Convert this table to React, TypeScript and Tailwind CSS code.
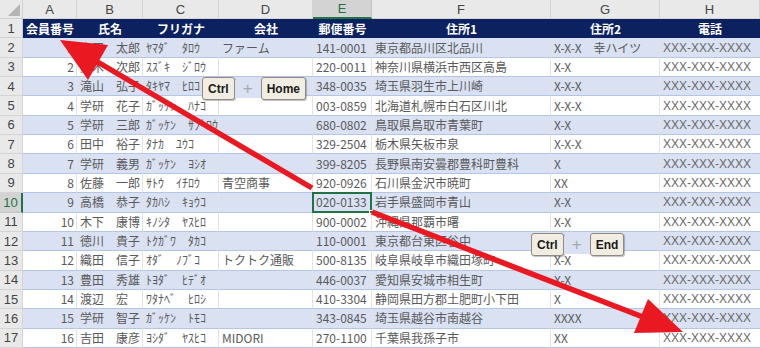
const colLetters = ['A', 'B', 'C', 'D', 'E', 'F', 'G', 'H']
const headers = ['会員番号', '氏名', 'フリガナ', '会社', '郵便番号', '住所1', '住所2', '電話']

const members: string[][] = [
  ['1', '山田　太郎', 'ﾔﾏﾀﾞ　ﾀﾛｳ', 'ファーム', '141-0001', '東京都品川区北品川', 'X-X-X　幸ハイツ'],
  ['2', '鈴木　次郎', 'ｽｽﾞｷ　ｼﾞﾛｳ', '', '220-0011', '神奈川県横浜市西区高島', 'X-X'],
  ['3', '滝山　弘子', 'ﾀｷﾔﾏ　ﾋﾛｺ', '', '348-0035', '埼玉県羽生市上川崎', 'X-X-X'],
  ['4', '学研　花子', 'ｶﾞｯｹﾝ　ﾊﾅｺ', '', '003-0859', '北海道札幌市白石区川北', 'X-X-X'],
  ['5', '学研　三郎', 'ｶﾞｯｹﾝ　ｻﾌﾞﾛｳ', '', '680-0802', '鳥取県鳥取市青葉町', 'X-X'],
  ['6', '田中　裕子', 'ﾀﾅｶ　ﾕｳｺ', '', '329-2504', '栃木県矢板市泉', 'X-X-X'],
  ['7', '学研　義男', 'ｶﾞｯｹﾝ　ﾖｼｵ', '', '399-8205', '長野県南安曇郡豊科町豊科', 'X'],
  ['8', '佐藤　一郎', 'ｻﾄｳ　ｲﾁﾛｳ', '青空商事', '920-0926', '石川県金沢市暁町', 'XX'],
  ['9', '高橋　恭子', 'ﾀｶﾊｼ　ｷｮｳｺ', '', '020-0133', '岩手県盛岡市青山', 'X-X'],
  ['10', '木下　康博', 'ｷﾉｼﾀ　ﾔｽﾋﾛ', '', '900-0002', '沖縄県那覇市曙', 'X-X'],
  ['11', '徳川　貴子', 'ﾄｸｶﾞﾜ　ﾀｶｺ', '', '110-0001', '東京都台東区谷中', 'X-X-X　XXXX'],
  ['12', '織田　信子', 'ｵﾀﾞ　ﾉﾌﾞｺ', 'トクトク通販', '500-8135', '岐阜県岐阜市織田塚町', 'X-X'],
  ['13', '豊田　秀雄', 'ﾄﾖﾀﾞ　ﾋﾃﾞｵ', '', '446-0037', '愛知県安城市相生町', 'X-X'],
  ['14', '渡辺　宏', 'ﾜﾀﾅﾍﾞ　ﾋﾛｼ', '', '410-3304', '静岡県田方郡土肥町小下田', 'X'],
  ['15', '学研　智子', 'ｶﾞｯｹﾝ　ﾄﾓｺ', '', '343-0845', '埼玉県越谷市南越谷', 'XXXX'],
  ['16', '吉田　康彦', 'ﾖｼﾀﾞ　ﾔｽﾋｺ', 'MIDORI', '270-1100', '千葉県我孫子市', 'XX'],
]

function Key({ label }: { label: string }) {
  return (
    <div className="h-[23px] min-w-[32px] px-[5px] flex items-center justify-center rounded-[3px] border border-[#8e8a80] bg-[#f1ede2] shadow-[1px_1px_1px_rgba(0,0,0,0.25)] text-[12px] leading-none font-bold text-[#1a1a1a] font-['Liberation_Sans',sans-serif]">
      {label}
    </div>
  )
}

function Shortcut({ keyName, className }: { keyName: string; className: string }) {
  return (
    <div className={`absolute flex items-center ${className}`}>
      <Key label="Ctrl" />
      <span className="w-[26px] h-[18px] flex items-center justify-center bg-[#d9e1f2] text-[17px] leading-none text-[#a8a8a8] font-['Liberation_Sans',sans-serif]">+</span>
      <Key label={keyName} />
    </div>
  )
}

export default function App() {
  return (
    <div className="relative w-[760px] h-[348px] overflow-hidden bg-white font-['Noto_Sans_CJK_JP',sans-serif] leading-none">
      <div className="grid h-full grid-cols-[23px_54px_66px_76px_94px_59px_179px_109px_100px] grid-rows-[19px_repeat(17,minmax(0,1fr))]">
        {/* column header */}
        <div className="relative bg-[#e9e9e9] border-r border-b border-[#cfcfcf]">
          <svg className="absolute right-[2px] bottom-[2px]" width="12" height="12" viewBox="0 0 12 12">
            <polygon points="12,0 12,12 0,12" fill="#b5b5b5" />
          </svg>
        </div>
        {colLetters.map((c) => (
          <div
            key={c}
            className={
              c === 'E'
                ? 'flex items-center justify-center bg-[#d3d3d3] border-r border-[#c4c4c4] border-b-2 border-b-[#217346] text-[13px] text-[#217346] font-["Liberation_Sans",sans-serif]'
                : 'flex items-center justify-center bg-[#e9e9e9] border-r border-b border-[#d4d4d4] text-[13px] text-[#444] font-["Liberation_Sans",sans-serif]'
            }
          >
            {c}
          </div>
        ))}

        {/* row 1: table header */}
        <div className="flex items-center justify-center bg-[#e9e9e9] border-r border-b border-[#cfcfcf] text-[13px] text-[#444] font-['Liberation_Sans',sans-serif]">
          1
        </div>
        {headers.map((h) => (
          <div key={h} className="flex items-center justify-center bg-[#0b2160] text-white text-[12px] font-bold">
            {h}
          </div>
        ))}

        {/* data rows */}
        {members.map((m, i) => {
          const rowNo = i + 2
          const banded = rowNo % 2 === 0
          const bg = banded ? 'bg-[#d9e1f2]' : 'bg-white'
          const cell = `min-h-0 flex items-center overflow-hidden whitespace-nowrap border-b border-[#b4c6e7] text-[12px] text-[#5a5a5a] ${bg}`
          const selected = rowNo === 10
          return [
            <div
              key={`h${rowNo}`}
              className={
                selected
                  ? 'min-h-0 flex items-center justify-center bg-[#d3d3d3] border-b border-[#c4c4c4] border-r-2 border-r-[#217346] text-[13px] text-[#217346] font-["Liberation_Sans",sans-serif]'
                  : 'min-h-0 flex items-center justify-center bg-[#e9e9e9] border-r border-b border-[#d4d4d4] text-[13px] text-[#444] font-["Liberation_Sans",sans-serif]'
              }
            >
              {rowNo}
            </div>,
            <div key={`a${rowNo}`} className={`${cell} justify-end pr-[2px] border-r border-r-[#e3e3e3]`}>{m[0]}</div>,
            <div key={`b${rowNo}`} className={`${cell} pl-[3px] border-r border-r-[#e3e3e3]`}>{m[1]}</div>,
            <div key={`c${rowNo}`} className={`${cell} pl-[3px] text-[10px] border-r border-r-[#e3e3e3]`}>{m[2]}</div>,
            <div key={`d${rowNo}`} className={`${cell} pl-[3px] border-r border-r-[#e3e3e3]`}>{m[3]}</div>,
            <div key={`e${rowNo}`} className={`${cell} relative overflow-visible pl-[3px] border-r border-r-[#e3e3e3]`}>
              {m[4]}
              {selected && (
                <>
                  <div className="absolute -inset-px border-2 border-[#217346]" />
                  <div className="absolute -right-[3px] -bottom-[3px] w-[5px] h-[5px] bg-[#217346] border border-white" />
                </>
              )}
            </div>,
            <div key={`f${rowNo}`} className={`${cell} pl-[3px] border-r border-r-[#e3e3e3]`}>{m[5]}</div>,
            <div key={`g${rowNo}`} className={`${cell} pl-[3px] border-r border-r-[#e3e3e3]`}>{m[6]}</div>,
            <div key={`hh${rowNo}`} className={`${cell} pl-[3px] font-['Liberation_Sans',sans-serif] text-[11px] text-[#6a6a6a]`}>XXX-XXX-XXXX</div>,
          ]
        })}
      </div>

      {/* red arrows */}
      <svg className="absolute inset-0 pointer-events-none" width="760" height="348" viewBox="0 0 760 348">
        <line x1="312" y1="188" x2="96" y2="61" stroke="#ea1820" strokeWidth="5.5" />
        <polygon points="60,40 108,45 88,80" fill="#ea1820" />
        <line x1="372" y1="212" x2="643" y2="317" stroke="#ea1820" strokeWidth="5.5" />
        <polygon points="683,332 648,299 634,333" fill="#ea1820" />
      </svg>

      <Shortcut keyName="Home" className="left-[202px] top-[77px]" />
      <Shortcut keyName="End" className="left-[531px] top-[233px]" />
    </div>
  )
}
